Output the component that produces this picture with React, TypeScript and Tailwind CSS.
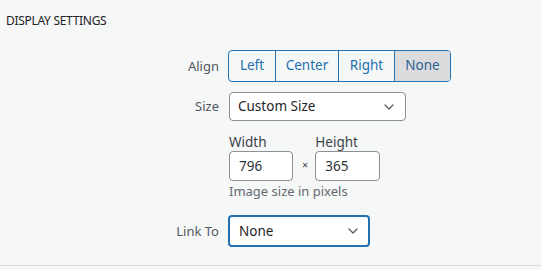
import { ChevronDown } from 'lucide-react';

const alignOptions = ['Left', 'Center', 'Right', 'None'];

function Row({ label, children, className = '' }: { label: string; children: React.ReactNode; className?: string }) {
  return (
    <div className={`flex items-center ${className}`}>
      <span className="w-[220px] pr-[1px] text-right text-[13px] text-[#50575e] leading-none">{label}</span>
      <div className="ml-[8px]">{children}</div>
    </div>
  );
}

export default function App() {
  const active = 'None';

  return (
    <div
      className="w-[541px] h-[270px] bg-[#f6f7f7] text-[#1d2327] flex flex-col"
      style={{ fontFamily: '"Noto Sans", "Open Sans", "Liberation Sans", sans-serif' }}
    >
      <h2 className="pl-[6px] pt-[13px] text-[12px] tracking-[-0.3px] uppercase text-[#1d2327] leading-[16px]">Display Settings</h2>

      <Row label="Align" className="mt-[21px]">
        <div className="flex h-[32px] rounded-[4px] border border-[#2271b1] overflow-hidden">
          {alignOptions.map((opt, i) => (
            <button
              key={opt}
              className={`h-full text-[13.5px] leading-none ${i > 0 ? 'border-l border-[#2271b1]' : ''} ${
                opt === active ? 'bg-[#dcdcde] text-[#2c5f8f] w-[56px]' : 'text-[#2271b1]'
              } ${opt === 'Left' ? 'w-[46px]' : ''} ${opt === 'Center' ? 'w-[63px]' : ''} ${opt === 'Right' ? 'w-[56px]' : ''}`}
            >
              {opt}
            </button>
          ))}
        </div>
      </Row>

      <Row label="Size" className="mt-[10px]">
        <div className="relative w-[177px] h-[29px] bg-white border border-[#8c8f94] rounded-[4px] flex items-center pl-[8px] text-[13.5px] ml-[1px]">
          Custom Size
          <ChevronDown size={16} strokeWidth={1.8} className="absolute right-[8px] top-[6px] text-[#50575e]" />
        </div>
      </Row>

      <div className="ml-[229px] mt-[12px] flex items-end">
        <label className="flex flex-col">
          <span className="text-[13.5px] leading-[18px] text-[#3c434a]">Width</span>
          <div className="w-[64px] h-[30px] bg-white border border-[#8c8f94] rounded-[4px] flex items-center pl-[9px] text-[13.5px] text-[#2c3338]">796</div>
        </label>
        <span className="ml-[9px] mr-[7px] mb-[8px] text-[11px] text-[#3c434a]">×</span>
        <label className="flex flex-col">
          <span className="text-[13.5px] leading-[18px] text-[#3c434a]">Height</span>
          <div className="w-[65px] h-[30px] bg-white border border-[#8c8f94] rounded-[4px] flex items-center pl-[9px] text-[13.5px] text-[#2c3338]">365</div>
        </label>
      </div>
      <p className="ml-[229px] mt-[1px] text-[13px] leading-[18px] text-[#646970]">Image size in pixels</p>

      <Row label="Link To" className="mt-[15px]">
        <div className="relative w-[142px] h-[32px] bg-white border-2 border-[#2271b1] rounded-[4px] flex items-center pl-[9px] text-[13.5px] text-[#1d2327]">
          None
          <ChevronDown size={16} strokeWidth={1.8} className="absolute right-[7px] top-[6px] text-[#50575e]" />
        </div>
      </Row>

      <div className="mt-[18px] h-px bg-[#dcdcde]" />
    </div>
  );
}
